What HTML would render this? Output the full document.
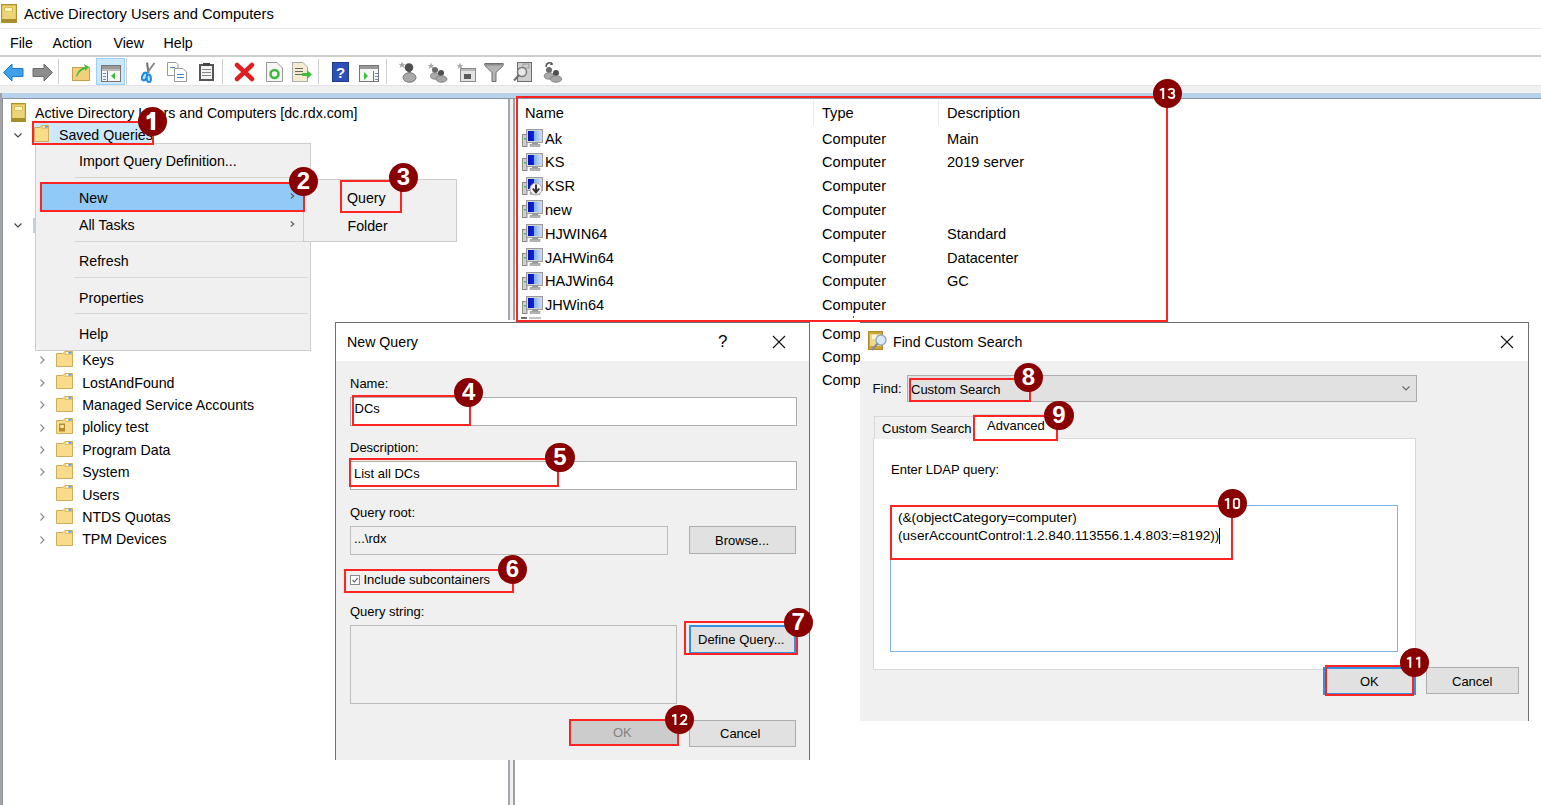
<!DOCTYPE html><html><head><meta charset="utf-8"><style>
html,body{margin:0;padding:0;}
body{width:1541px;height:805px;position:relative;overflow:hidden;background:#fff;font-family:"Liberation Sans",sans-serif;}
.a{position:absolute;}
.t{position:absolute;white-space:pre;}
.badge{background:#880000;border-radius:50%;color:#fff;display:flex;align-items:center;justify-content:center;}
</style></head><body>
<svg class="a" style="left:1px;top:4px" width="16" height="19" viewBox="0 0 16 19"><rect x="0.5" y="0.5" width="15" height="18" fill="#d9bd52" stroke="#b0922e"/><rect x="1.5" y="2" width="13" height="13" fill="#ecd47a"/><rect x="3" y="3" width="9" height="4.5" fill="#d8bc50"/><rect x="4" y="4" width="7" height="3" fill="#fff6c4"/><rect x="1" y="15" width="14" height="3.5" fill="#a88d2a"/></svg>
<div class="t" style="left:24px;top:6.56px;font-size:14.7px;line-height:14.7px;color:#000;">Active Directory Users and Computers</div>
<div class="a" style="left:0px;top:28px;width:1541px;height:1px;background:#e8e8e8;"></div>
<div class="t" style="left:10px;top:35.98px;font-size:14.2px;line-height:14.2px;color:#000;">File</div>
<div class="t" style="left:52.5px;top:35.98px;font-size:14.2px;line-height:14.2px;color:#000;">Action</div>
<div class="t" style="left:113.5px;top:35.98px;font-size:14.2px;line-height:14.2px;color:#000;">View</div>
<div class="t" style="left:163.5px;top:35.98px;font-size:14.2px;line-height:14.2px;color:#000;">Help</div>
<div class="a" style="left:0px;top:55px;width:1541px;height:2px;background:#cdcdcd;"></div>
<div class="a" style="left:96px;top:58px;width:29px;height:27px;background:#cce8ff;border:1px solid #99d1ff;box-sizing:border-box;"></div>
<div class="a" style="left:58px;top:59px;width:1px;height:25px;background:#cfcfcf;"></div>
<div class="a" style="left:126px;top:59px;width:1px;height:25px;background:#cfcfcf;"></div>
<div class="a" style="left:222px;top:59px;width:1px;height:25px;background:#cfcfcf;"></div>
<div class="a" style="left:318px;top:59px;width:1px;height:25px;background:#cfcfcf;"></div>
<div class="a" style="left:386px;top:59px;width:1px;height:25px;background:#cfcfcf;"></div>
<div class="a" style="left:0px;top:85px;width:1541px;height:8px;background:#f0f0f0;"></div>
<div class="a" style="left:0px;top:85px;width:1541px;height:1px;background:#e4e4e4;"></div>
<div class="a" style="left:0px;top:93px;width:1541px;height:5px;background:#b9d1ea;"></div>
<div class="a" style="left:0px;top:98px;width:1541px;height:1px;background:#8a96a3;"></div>
<div class="a" style="left:0px;top:93px;width:2px;height:712px;background:#a3a3a3;"></div>
<div class="a" style="left:2px;top:99px;width:1px;height:706px;background:#8c939c;"></div>
<div class="a" style="left:508px;top:99px;width:2px;height:706px;background:#a3a8ae;"></div>
<div class="a" style="left:510px;top:99px;width:3px;height:706px;background:#f0f0f0;"></div>
<div class="a" style="left:513px;top:99px;width:2px;height:706px;background:#a0a0a0;"></div>
<div class="a" style="left:507px;top:320px;width:9px;height:2px;background:#ffffff;"></div>
<div id="icons">
<svg class="a" style="left:3px;top:63px" width="21" height="19" viewBox="0 0 21 19"><path d="M0.5 9.5 L9 1 V5.5 H20 V13.5 H9 V18 Z" fill="#3da0e8" stroke="#1f78c8"/></svg>
<svg class="a" style="left:32px;top:63px" width="21" height="19" viewBox="0 0 21 19"><path d="M20.5 9.5 L12 1 V5.5 H1 V13.5 H12 V18 Z" fill="#8d8d8d" stroke="#6a6a6a"/></svg>
<svg class="a" style="left:72px;top:62px" width="19" height="20" viewBox="0 0 19 20"><rect x="0.5" y="5.5" width="17" height="13" fill="#f4cf7a" stroke="#c9a04e"/><path d="M4 14 C6 8 9 6 13 5 L12 2 L17 5 L13 9 L13 7 C10 8 7 10 5 15Z" fill="#3cbf3c"/></svg>
<svg class="a" style="left:101px;top:65px" width="21" height="17" viewBox="0 0 21 17"><rect x="0.5" y="0.5" width="19" height="16" fill="#f6f6f6" stroke="#777"/><rect x="1" y="1" width="18" height="3" fill="#999"/><rect x="1" y="4" width="18" height="2" fill="#bbb"/><rect x="6" y="6" width="1" height="10" fill="#777"/><rect x="2" y="8" width="3" height="1" fill="#5a8ad0"/><rect x="2" y="11" width="3" height="1" fill="#5a8ad0"/><rect x="2" y="14" width="3" height="1" fill="#5a8ad0"/><path d="M10 11 L14 7.5 V14.5Z" fill="#3cbf3c"/></svg>
<svg class="a" style="left:141px;top:61px" width="16" height="22" viewBox="0 0 16 22"><path d="M7.5 12 L6 1.5" stroke="#707070" stroke-width="2"/><path d="M6 12 L13.5 2" stroke="#8a8a8a" stroke-width="2"/><ellipse transform="rotate(25 3.6 15.5)" cx="3.6" cy="15.5" rx="2.4" ry="4" fill="#bfe0ff" stroke="#1f8ae8" stroke-width="2"/><ellipse transform="rotate(-5 7.8 17.3)" cx="7.8" cy="17.3" rx="2.1" ry="3.8" fill="#bfe0ff" stroke="#1f8ae8" stroke-width="2"/></svg>
<svg class="a" style="left:167px;top:62px" width="21" height="20" viewBox="0 0 21 20"><path d="M0.5 0.5 H9 L11 2.5 V13.5 H0.5Z" fill="#fff" stroke="#999"/><path d="M7.5 6.5 H16 L19.5 10 V19.5 H7.5Z" fill="#fff" stroke="#999"/><rect x="10" y="12" width="7" height="1" fill="#4a86d0"/><rect x="10" y="15" width="7" height="1" fill="#4a86d0"/><rect x="3" y="5" width="5" height="1" fill="#4a86d0"/></svg>
<svg class="a" style="left:198px;top:62px" width="17" height="20" viewBox="0 0 17 20"><rect x="1" y="2" width="15" height="17" fill="#555" /><rect x="3" y="4" width="11" height="13" fill="#f4f4f4"/><rect x="5" y="1" width="7" height="3" fill="#444"/><rect x="4" y="7" width="9" height="1" fill="#888"/><rect x="4" y="10" width="9" height="1" fill="#888"/><rect x="4" y="13" width="9" height="1" fill="#888"/></svg>
<svg class="a" style="left:234px;top:62px" width="21" height="20" viewBox="0 0 21 20"><path d="M3 3 L18 17 M18 3 L3 17" stroke="#e02020" stroke-width="4.5" stroke-linecap="round"/></svg>
<svg class="a" style="left:266px;top:62px" width="17" height="20" viewBox="0 0 17 20"><path d="M0.5 0.5 H11 L16.5 6 V19.5 H0.5Z" fill="#f6f6f6" stroke="#999"/><circle cx="8.5" cy="12" r="4" fill="none" stroke="#3cb83c" stroke-width="2.5"/></svg>
<svg class="a" style="left:292px;top:62px" width="21" height="20" viewBox="0 0 21 20"><path d="M0.5 0.5 H11 L15.5 5 V19.5 H0.5Z" fill="#f3ecd0" stroke="#aaa"/><rect x="3" y="6" width="8" height="1" fill="#666"/><rect x="3" y="9" width="8" height="1" fill="#666"/><rect x="3" y="12" width="8" height="1" fill="#666"/><path d="M10 11 H15 V8 L20 12.5 L15 17 V14 H10Z" fill="#3cbf3c"/></svg>
<svg class="a" style="left:332px;top:62px" width="17" height="20" viewBox="0 0 17 20"><rect x="0.5" y="0.5" width="16" height="19" fill="#2d4fb8" stroke="#1e3a8a"/><text x="8.5" y="16" font-size="15" font-weight="bold" fill="#fff" text-anchor="middle" font-family="Liberation Sans">?</text></svg>
<svg class="a" style="left:359px;top:65px" width="21" height="17" viewBox="0 0 21 17"><rect x="0.5" y="0.5" width="19" height="16" fill="#f6f6f6" stroke="#777"/><rect x="1" y="1" width="18" height="3" fill="#999"/><rect x="14" y="6" width="1" height="10" fill="#777"/><rect x="16" y="8" width="3" height="1" fill="#5a8ad0"/><rect x="16" y="11" width="3" height="1" fill="#5a8ad0"/><rect x="16" y="14" width="3" height="1" fill="#5a8ad0"/><path d="M5 7 L9 11 L5 15Z" fill="#3cbf3c"/></svg>
<svg class="a" style="left:398px;top:61px" width="20" height="22" viewBox="0 0 20 22"><path d="M4 0.5 L5 3 L7.5 2.8 L5.5 4.6 L6.5 7 L4 5.5 L1.5 7 L2.5 4.6 L0.5 2.8 L3 3Z" fill="#a8a8a8"/><circle cx="11" cy="6.5" r="4.3" fill="#4e4e4e"/><path d="M9 10 L13 10 L12 13 Z" fill="#555"/><ellipse cx="11.5" cy="16.5" rx="6.5" ry="4.8" fill="#a9a9a9" stroke="#7a7a7a"/></svg>
<svg class="a" style="left:427px;top:62px" width="21" height="21" viewBox="0 0 21 21"><path d="M4 0.5 L5 3 L7.5 2.8 L5.5 4.6 L6.5 7 L4 5.5 L1.5 7 L2.5 4.6 L0.5 2.8 L3 3Z" fill="#a8a8a8"/><circle cx="8" cy="8" r="3" fill="#6a6a6a"/><ellipse cx="8" cy="14" rx="4.5" ry="3.2" fill="#aaa" stroke="#808080" stroke-width="0.8"/><circle cx="14" cy="11" r="3" fill="#4e4e4e"/><ellipse cx="14.5" cy="17" rx="5.5" ry="3.3" fill="#a5a5a5" stroke="#7a7a7a" stroke-width="0.8"/></svg>
<svg class="a" style="left:456px;top:62px" width="21" height="21" viewBox="0 0 21 21"><path d="M4 0.5 L5 3 L7.5 2.8 L5.5 4.6 L6.5 7 L4 5.5 L1.5 7 L2.5 4.6 L0.5 2.8 L3 3Z" fill="#a8a8a8"/><rect x="4.5" y="6.5" width="15" height="13" fill="#e2e2e2" stroke="#8a8a8a"/><rect x="5" y="7" width="14" height="2" fill="#b8b8b8"/><rect x="8" y="12" width="7" height="5" fill="#5a5a5a"/></svg>
<svg class="a" style="left:484px;top:62px" width="20" height="21" viewBox="0 0 20 21"><path d="M0.8 1.5 H19.2 V3.5 L12 10.5 V19.5 H8 V10.5 L0.8 3.5Z" fill="#b4b4b4" stroke="#6e6e6e"/><rect x="1.5" y="2" width="17" height="1.5" fill="#8a8a8a"/></svg>
<svg class="a" style="left:512px;top:62px" width="21" height="21" viewBox="0 0 21 21"><rect x="5.5" y="0.5" width="14" height="19" fill="#cfcfcf" stroke="#6e6e6e"/><rect x="11" y="2" width="6" height="4" fill="none" stroke="#999"/><circle cx="10" cy="10" r="4.5" fill="#e8e8e8" stroke="#7a7a7a" stroke-width="1.5"/><path d="M7 13 L2 18.5" stroke="#6e6e6e" stroke-width="2"/></svg>
<svg class="a" style="left:541px;top:61px" width="22" height="22" viewBox="0 0 22 22"><path d="M5 6 C5 2 9 0.5 11.5 3" stroke="#555" fill="none" stroke-width="1.5"/><path d="M10.5 1 L12 4 L9 4Z" fill="#555"/><circle cx="8" cy="9" r="3" fill="#6a6a6a"/><ellipse cx="8" cy="15" rx="4.8" ry="3.2" fill="#aaa" stroke="#808080" stroke-width="0.8"/><circle cx="15" cy="12" r="3" fill="#4e4e4e"/><ellipse cx="15" cy="18" rx="5.8" ry="3.3" fill="#a5a5a5" stroke="#7a7a7a" stroke-width="0.8"/></svg>
</div>
<svg class="a" style="left:11px;top:103px" width="15" height="19" viewBox="0 0 15 19"><rect x="0.5" y="0.5" width="14" height="18" fill="#d9bd52" stroke="#b0922e"/><rect x="1.5" y="2" width="12" height="13" fill="#ecd47a"/><rect x="3" y="3" width="9" height="4.5" fill="#d8bc50"/><rect x="4" y="4" width="7" height="3" fill="#fff6c4"/><rect x="1" y="15" width="13" height="3.5" fill="#a88d2a"/></svg>
<div class="t" style="left:35px;top:105.98px;font-size:14.2px;line-height:14.2px;color:#000;">Active Directory Users and Computers [dc.rdx.com]</div>
<div class="a" style="left:33px;top:122px;width:119px;height:22px;background:#cce8ff;"></div>
<svg class="a" style="left:34px;top:125px" width="15" height="17" viewBox="0 0 15 17"><path d="M0.5 2.5 H6.3 L7.8 0.5 H14.5 V16.5 H0.5 Z" fill="#f3d27c" stroke="#cfae5a"/><rect x="1" y="3" width="13" height="13" fill="#f8dc8c"/><path d="M7.5 3.5 H14" stroke="#e2c26c"/><rect x="10.8" y="1" width="3.0" height="1.6" fill="#5a9ee6"/><rect x="9.3" y="1" width="1.5" height="1.6" fill="#ffffff"/></svg>
<div class="t" style="left:59px;top:127.98px;font-size:14.2px;line-height:14.2px;color:#000;">Saved Queries</div>
<svg class="a" style="left:14px;top:133px" width="8" height="5" viewBox="0 0 8 5"><path d="M0.5 0.5 L4 4 L7.5 0.5" fill="none" stroke="#444" stroke-width="1.2"/></svg>
<svg class="a" style="left:14px;top:223px" width="8" height="5" viewBox="0 0 8 5"><path d="M0.5 0.5 L4 4 L7.5 0.5" fill="none" stroke="#444" stroke-width="1.2"/></svg>
<div class="a" style="left:33px;top:218px;width:2px;height:15px;background:#c8d0dc;"></div>
<svg class="a" style="left:40px;top:356.3px" width="5" height="8" viewBox="0 0 5 8"><path d="M0.5 0.5 L4 4 L0.5 7.5" fill="none" stroke="#888" stroke-width="1.1"/></svg>
<svg class="a" style="left:56px;top:351.0px" width="17" height="16" viewBox="0 0 17 16"><path d="M0.5 2.5 H7.1 L8.8 0.5 H16.5 V15.5 H0.5 Z" fill="#f3d27c" stroke="#cfae5a"/><rect x="1" y="3" width="15" height="12" fill="#f8dc8c"/><path d="M8.5 3.5 H16" stroke="#e2c26c"/><rect x="12.2" y="1" width="3.4" height="1.6" fill="#5a9ee6"/><rect x="10.5" y="1" width="1.7" height="1.6" fill="#ffffff"/></svg>
<div class="t" style="left:82.2px;top:353.28px;font-size:14.2px;line-height:14.2px;color:#000;">Keys</div>
<svg class="a" style="left:40px;top:378.7px" width="5" height="8" viewBox="0 0 5 8"><path d="M0.5 0.5 L4 4 L0.5 7.5" fill="none" stroke="#888" stroke-width="1.1"/></svg>
<svg class="a" style="left:56px;top:373.4px" width="17" height="16" viewBox="0 0 17 16"><path d="M0.5 2.5 H7.1 L8.8 0.5 H16.5 V15.5 H0.5 Z" fill="#f3d27c" stroke="#cfae5a"/><rect x="1" y="3" width="15" height="12" fill="#f8dc8c"/><path d="M8.5 3.5 H16" stroke="#e2c26c"/><rect x="12.2" y="1" width="3.4" height="1.6" fill="#5a9ee6"/><rect x="10.5" y="1" width="1.7" height="1.6" fill="#ffffff"/></svg>
<div class="t" style="left:82.2px;top:375.68px;font-size:14.2px;line-height:14.2px;color:#000;">LostAndFound</div>
<svg class="a" style="left:40px;top:401.1px" width="5" height="8" viewBox="0 0 5 8"><path d="M0.5 0.5 L4 4 L0.5 7.5" fill="none" stroke="#888" stroke-width="1.1"/></svg>
<svg class="a" style="left:56px;top:395.8px" width="17" height="16" viewBox="0 0 17 16"><path d="M0.5 2.5 H7.1 L8.8 0.5 H16.5 V15.5 H0.5 Z" fill="#f3d27c" stroke="#cfae5a"/><rect x="1" y="3" width="15" height="12" fill="#f8dc8c"/><path d="M8.5 3.5 H16" stroke="#e2c26c"/><rect x="12.2" y="1" width="3.4" height="1.6" fill="#5a9ee6"/><rect x="10.5" y="1" width="1.7" height="1.6" fill="#ffffff"/></svg>
<div class="t" style="left:82.2px;top:398.08px;font-size:14.2px;line-height:14.2px;color:#000;">Managed Service Accounts</div>
<svg class="a" style="left:40px;top:423.5px" width="5" height="8" viewBox="0 0 5 8"><path d="M0.5 0.5 L4 4 L0.5 7.5" fill="none" stroke="#888" stroke-width="1.1"/></svg>
<svg class="a" style="left:56px;top:418.2px" width="17" height="16" viewBox="0 0 17 16"><path d="M0.5 2.5 H7.1 L8.8 0.5 H16.5 V15.5 H0.5 Z" fill="#f3d27c" stroke="#cfae5a"/><rect x="1" y="3" width="15" height="12" fill="#f8dc8c"/><path d="M8.5 3.5 H16" stroke="#e2c26c"/><rect x="12.2" y="1" width="3.4" height="1.6" fill="#5a9ee6"/><rect x="10.5" y="1" width="1.7" height="1.6" fill="#ffffff"/><rect x="3" y="5.5" width="6" height="8" fill="#b08a2c"/><rect x="4.2" y="7" width="3.6" height="3" fill="#f5e7a8"/></svg>
<div class="t" style="left:82.2px;top:420.48px;font-size:14.2px;line-height:14.2px;color:#000;">plolicy test</div>
<svg class="a" style="left:40px;top:445.9px" width="5" height="8" viewBox="0 0 5 8"><path d="M0.5 0.5 L4 4 L0.5 7.5" fill="none" stroke="#888" stroke-width="1.1"/></svg>
<svg class="a" style="left:56px;top:440.59999999999997px" width="17" height="16" viewBox="0 0 17 16"><path d="M0.5 2.5 H7.1 L8.8 0.5 H16.5 V15.5 H0.5 Z" fill="#f3d27c" stroke="#cfae5a"/><rect x="1" y="3" width="15" height="12" fill="#f8dc8c"/><path d="M8.5 3.5 H16" stroke="#e2c26c"/><rect x="12.2" y="1" width="3.4" height="1.6" fill="#5a9ee6"/><rect x="10.5" y="1" width="1.7" height="1.6" fill="#ffffff"/></svg>
<div class="t" style="left:82.2px;top:442.88px;font-size:14.2px;line-height:14.2px;color:#000;">Program Data</div>
<svg class="a" style="left:40px;top:468.3px" width="5" height="8" viewBox="0 0 5 8"><path d="M0.5 0.5 L4 4 L0.5 7.5" fill="none" stroke="#888" stroke-width="1.1"/></svg>
<svg class="a" style="left:56px;top:463.0px" width="17" height="16" viewBox="0 0 17 16"><path d="M0.5 2.5 H7.1 L8.8 0.5 H16.5 V15.5 H0.5 Z" fill="#f3d27c" stroke="#cfae5a"/><rect x="1" y="3" width="15" height="12" fill="#f8dc8c"/><path d="M8.5 3.5 H16" stroke="#e2c26c"/><rect x="12.2" y="1" width="3.4" height="1.6" fill="#5a9ee6"/><rect x="10.5" y="1" width="1.7" height="1.6" fill="#ffffff"/></svg>
<div class="t" style="left:82.2px;top:465.28px;font-size:14.2px;line-height:14.2px;color:#000;">System</div>
<svg class="a" style="left:56px;top:485.4px" width="17" height="16" viewBox="0 0 17 16"><path d="M0.5 2.5 H7.1 L8.8 0.5 H16.5 V15.5 H0.5 Z" fill="#f3d27c" stroke="#cfae5a"/><rect x="1" y="3" width="15" height="12" fill="#f8dc8c"/><path d="M8.5 3.5 H16" stroke="#e2c26c"/><rect x="12.2" y="1" width="3.4" height="1.6" fill="#5a9ee6"/><rect x="10.5" y="1" width="1.7" height="1.6" fill="#ffffff"/></svg>
<div class="t" style="left:82.2px;top:487.68px;font-size:14.2px;line-height:14.2px;color:#000;">Users</div>
<svg class="a" style="left:40px;top:513.1px" width="5" height="8" viewBox="0 0 5 8"><path d="M0.5 0.5 L4 4 L0.5 7.5" fill="none" stroke="#888" stroke-width="1.1"/></svg>
<svg class="a" style="left:56px;top:507.8px" width="17" height="16" viewBox="0 0 17 16"><path d="M0.5 2.5 H7.1 L8.8 0.5 H16.5 V15.5 H0.5 Z" fill="#f3d27c" stroke="#cfae5a"/><rect x="1" y="3" width="15" height="12" fill="#f8dc8c"/><path d="M8.5 3.5 H16" stroke="#e2c26c"/><rect x="12.2" y="1" width="3.4" height="1.6" fill="#5a9ee6"/><rect x="10.5" y="1" width="1.7" height="1.6" fill="#ffffff"/></svg>
<div class="t" style="left:82.2px;top:510.08px;font-size:14.2px;line-height:14.2px;color:#000;">NTDS Quotas</div>
<svg class="a" style="left:40px;top:535.5px" width="5" height="8" viewBox="0 0 5 8"><path d="M0.5 0.5 L4 4 L0.5 7.5" fill="none" stroke="#888" stroke-width="1.1"/></svg>
<svg class="a" style="left:56px;top:530.2px" width="17" height="16" viewBox="0 0 17 16"><path d="M0.5 2.5 H7.1 L8.8 0.5 H16.5 V15.5 H0.5 Z" fill="#f3d27c" stroke="#cfae5a"/><rect x="1" y="3" width="15" height="12" fill="#f8dc8c"/><path d="M8.5 3.5 H16" stroke="#e2c26c"/><rect x="12.2" y="1" width="3.4" height="1.6" fill="#5a9ee6"/><rect x="10.5" y="1" width="1.7" height="1.6" fill="#ffffff"/></svg>
<div class="t" style="left:82.2px;top:532.48px;font-size:14.2px;line-height:14.2px;color:#000;">TPM Devices</div>
<div class="a" style="left:813px;top:100px;width:1px;height:26px;background:#ececec;"></div>
<div class="a" style="left:938px;top:100px;width:1px;height:26px;background:#ececec;"></div>
<div class="t" style="left:525px;top:105.64px;font-size:14.6px;line-height:14.6px;color:#000;">Name</div>
<div class="t" style="left:822px;top:105.64px;font-size:14.6px;line-height:14.6px;color:#000;">Type</div>
<div class="t" style="left:947px;top:105.64px;font-size:14.6px;line-height:14.6px;color:#000;">Description</div>
<svg class="a" style="left:521.5px;top:129.0px" width="21" height="19" viewBox="0 0 21 19"><defs><linearGradient id="scr" x1="0" y1="0" x2="1" y2="0"><stop offset="0" stop-color="#0612b8"/><stop offset="0.45" stop-color="#0a2ad8"/><stop offset="0.5" stop-color="#88b0ee"/><stop offset="1" stop-color="#c8dcf6"/></linearGradient></defs><rect x="0.5" y="5.5" width="4.5" height="12" fill="#cfcfcf" stroke="#8a8a8a"/><rect x="2" y="9" width="2" height="1.5" fill="#33cc33"/><rect x="4.5" y="0.5" width="16" height="13" fill="#d6d6d6" stroke="#9a9a9a"/><rect x="6" y="2" width="13" height="10" fill="url(#scr)"/><rect x="10" y="13.5" width="6" height="2" fill="#9a9a9a"/><rect x="8" y="15.5" width="10" height="2" fill="#b4b4b4" stroke="#888" stroke-width="0.5"/></svg>
<div class="t" style="left:545px;top:131.54px;font-size:14.6px;line-height:14.6px;color:#000;">Ak</div>
<div class="t" style="left:822px;top:131.54px;font-size:14.6px;line-height:14.6px;color:#000;">Computer</div>
<div class="t" style="left:947px;top:131.54px;font-size:14.6px;line-height:14.6px;color:#000;">Main</div>
<svg class="a" style="left:521.5px;top:152.8px" width="21" height="19" viewBox="0 0 21 19"><defs><linearGradient id="scr" x1="0" y1="0" x2="1" y2="0"><stop offset="0" stop-color="#0612b8"/><stop offset="0.45" stop-color="#0a2ad8"/><stop offset="0.5" stop-color="#88b0ee"/><stop offset="1" stop-color="#c8dcf6"/></linearGradient></defs><rect x="0.5" y="5.5" width="4.5" height="12" fill="#cfcfcf" stroke="#8a8a8a"/><rect x="2" y="9" width="2" height="1.5" fill="#33cc33"/><rect x="4.5" y="0.5" width="16" height="13" fill="#d6d6d6" stroke="#9a9a9a"/><rect x="6" y="2" width="13" height="10" fill="url(#scr)"/><rect x="10" y="13.5" width="6" height="2" fill="#9a9a9a"/><rect x="8" y="15.5" width="10" height="2" fill="#b4b4b4" stroke="#888" stroke-width="0.5"/></svg>
<div class="t" style="left:545px;top:155.34px;font-size:14.6px;line-height:14.6px;color:#000;">KS</div>
<div class="t" style="left:822px;top:155.34px;font-size:14.6px;line-height:14.6px;color:#000;">Computer</div>
<div class="t" style="left:947px;top:155.34px;font-size:14.6px;line-height:14.6px;color:#000;">2019 server</div>
<svg class="a" style="left:521.5px;top:176.6px" width="21" height="19" viewBox="0 0 21 19"><defs><linearGradient id="scr" x1="0" y1="0" x2="1" y2="0"><stop offset="0" stop-color="#0612b8"/><stop offset="0.45" stop-color="#0a2ad8"/><stop offset="0.5" stop-color="#88b0ee"/><stop offset="1" stop-color="#c8dcf6"/></linearGradient></defs><rect x="0.5" y="5.5" width="4.5" height="12" fill="#cfcfcf" stroke="#8a8a8a"/><rect x="2" y="9" width="2" height="1.5" fill="#33cc33"/><rect x="4.5" y="0.5" width="16" height="13" fill="#d6d6d6" stroke="#9a9a9a"/><rect x="6" y="2" width="13" height="10" fill="url(#scr)"/><rect x="10" y="13.5" width="6" height="2" fill="#9a9a9a"/><rect x="8" y="15.5" width="10" height="2" fill="#b4b4b4" stroke="#888" stroke-width="0.5"/><circle cx="14" cy="12" r="6" fill="#f4f4f4" stroke="#aaa"/><path d="M14 7.5 V14 M10.8 11.5 L14 15.5 L17.2 11.5" fill="none" stroke="#333" stroke-width="2"/></svg>
<div class="t" style="left:545px;top:179.14px;font-size:14.6px;line-height:14.6px;color:#000;">KSR</div>
<div class="t" style="left:822px;top:179.14px;font-size:14.6px;line-height:14.6px;color:#000;">Computer</div>
<svg class="a" style="left:521.5px;top:200.4px" width="21" height="19" viewBox="0 0 21 19"><defs><linearGradient id="scr" x1="0" y1="0" x2="1" y2="0"><stop offset="0" stop-color="#0612b8"/><stop offset="0.45" stop-color="#0a2ad8"/><stop offset="0.5" stop-color="#88b0ee"/><stop offset="1" stop-color="#c8dcf6"/></linearGradient></defs><rect x="0.5" y="5.5" width="4.5" height="12" fill="#cfcfcf" stroke="#8a8a8a"/><rect x="2" y="9" width="2" height="1.5" fill="#33cc33"/><rect x="4.5" y="0.5" width="16" height="13" fill="#d6d6d6" stroke="#9a9a9a"/><rect x="6" y="2" width="13" height="10" fill="url(#scr)"/><rect x="10" y="13.5" width="6" height="2" fill="#9a9a9a"/><rect x="8" y="15.5" width="10" height="2" fill="#b4b4b4" stroke="#888" stroke-width="0.5"/></svg>
<div class="t" style="left:545px;top:202.94px;font-size:14.6px;line-height:14.6px;color:#000;">new</div>
<div class="t" style="left:822px;top:202.94px;font-size:14.6px;line-height:14.6px;color:#000;">Computer</div>
<svg class="a" style="left:521.5px;top:224.20000000000002px" width="21" height="19" viewBox="0 0 21 19"><defs><linearGradient id="scr" x1="0" y1="0" x2="1" y2="0"><stop offset="0" stop-color="#0612b8"/><stop offset="0.45" stop-color="#0a2ad8"/><stop offset="0.5" stop-color="#88b0ee"/><stop offset="1" stop-color="#c8dcf6"/></linearGradient></defs><rect x="0.5" y="5.5" width="4.5" height="12" fill="#cfcfcf" stroke="#8a8a8a"/><rect x="2" y="9" width="2" height="1.5" fill="#33cc33"/><rect x="4.5" y="0.5" width="16" height="13" fill="#d6d6d6" stroke="#9a9a9a"/><rect x="6" y="2" width="13" height="10" fill="url(#scr)"/><rect x="10" y="13.5" width="6" height="2" fill="#9a9a9a"/><rect x="8" y="15.5" width="10" height="2" fill="#b4b4b4" stroke="#888" stroke-width="0.5"/></svg>
<div class="t" style="left:545px;top:226.74px;font-size:14.6px;line-height:14.6px;color:#000;">HJWIN64</div>
<div class="t" style="left:822px;top:226.74px;font-size:14.6px;line-height:14.6px;color:#000;">Computer</div>
<div class="t" style="left:947px;top:226.74px;font-size:14.6px;line-height:14.6px;color:#000;">Standard</div>
<svg class="a" style="left:521.5px;top:247.99999999999997px" width="21" height="19" viewBox="0 0 21 19"><defs><linearGradient id="scr" x1="0" y1="0" x2="1" y2="0"><stop offset="0" stop-color="#0612b8"/><stop offset="0.45" stop-color="#0a2ad8"/><stop offset="0.5" stop-color="#88b0ee"/><stop offset="1" stop-color="#c8dcf6"/></linearGradient></defs><rect x="0.5" y="5.5" width="4.5" height="12" fill="#cfcfcf" stroke="#8a8a8a"/><rect x="2" y="9" width="2" height="1.5" fill="#33cc33"/><rect x="4.5" y="0.5" width="16" height="13" fill="#d6d6d6" stroke="#9a9a9a"/><rect x="6" y="2" width="13" height="10" fill="url(#scr)"/><rect x="10" y="13.5" width="6" height="2" fill="#9a9a9a"/><rect x="8" y="15.5" width="10" height="2" fill="#b4b4b4" stroke="#888" stroke-width="0.5"/></svg>
<div class="t" style="left:545px;top:250.54px;font-size:14.6px;line-height:14.6px;color:#000;">JAHWin64</div>
<div class="t" style="left:822px;top:250.54px;font-size:14.6px;line-height:14.6px;color:#000;">Computer</div>
<div class="t" style="left:947px;top:250.54px;font-size:14.6px;line-height:14.6px;color:#000;">Datacenter</div>
<svg class="a" style="left:521.5px;top:271.80000000000007px" width="21" height="19" viewBox="0 0 21 19"><defs><linearGradient id="scr" x1="0" y1="0" x2="1" y2="0"><stop offset="0" stop-color="#0612b8"/><stop offset="0.45" stop-color="#0a2ad8"/><stop offset="0.5" stop-color="#88b0ee"/><stop offset="1" stop-color="#c8dcf6"/></linearGradient></defs><rect x="0.5" y="5.5" width="4.5" height="12" fill="#cfcfcf" stroke="#8a8a8a"/><rect x="2" y="9" width="2" height="1.5" fill="#33cc33"/><rect x="4.5" y="0.5" width="16" height="13" fill="#d6d6d6" stroke="#9a9a9a"/><rect x="6" y="2" width="13" height="10" fill="url(#scr)"/><rect x="10" y="13.5" width="6" height="2" fill="#9a9a9a"/><rect x="8" y="15.5" width="10" height="2" fill="#b4b4b4" stroke="#888" stroke-width="0.5"/></svg>
<div class="t" style="left:545px;top:274.34px;font-size:14.6px;line-height:14.6px;color:#000;">HAJWin64</div>
<div class="t" style="left:822px;top:274.34px;font-size:14.6px;line-height:14.6px;color:#000;">Computer</div>
<div class="t" style="left:947px;top:274.34px;font-size:14.6px;line-height:14.6px;color:#000;">GC</div>
<svg class="a" style="left:521.5px;top:295.6px" width="21" height="19" viewBox="0 0 21 19"><defs><linearGradient id="scr" x1="0" y1="0" x2="1" y2="0"><stop offset="0" stop-color="#0612b8"/><stop offset="0.45" stop-color="#0a2ad8"/><stop offset="0.5" stop-color="#88b0ee"/><stop offset="1" stop-color="#c8dcf6"/></linearGradient></defs><rect x="0.5" y="5.5" width="4.5" height="12" fill="#cfcfcf" stroke="#8a8a8a"/><rect x="2" y="9" width="2" height="1.5" fill="#33cc33"/><rect x="4.5" y="0.5" width="16" height="13" fill="#d6d6d6" stroke="#9a9a9a"/><rect x="6" y="2" width="13" height="10" fill="url(#scr)"/><rect x="10" y="13.5" width="6" height="2" fill="#9a9a9a"/><rect x="8" y="15.5" width="10" height="2" fill="#b4b4b4" stroke="#888" stroke-width="0.5"/></svg>
<div class="t" style="left:545px;top:298.14px;font-size:14.6px;line-height:14.6px;color:#000;">JHWin64</div>
<div class="t" style="left:822px;top:298.14px;font-size:14.6px;line-height:14.6px;color:#000;">Computer</div>
<div class="a" style="left:853px;top:311px;width:1px;height:2px;background:#555;"></div>
<div class="a" style="left:853px;top:316px;width:1px;height:2px;background:#555;"></div>
<div class="a" style="left:521px;top:317px;width:6px;height:1.5px;background:#6a6a6a;"></div>
<div class="a" style="left:529px;top:317px;width:12px;height:1.5px;background:#c4c4c4;"></div>
<div class="t" style="left:822px;top:326.64px;font-size:14.6px;line-height:14.6px;color:#000;">Computer</div>
<div class="t" style="left:822px;top:349.94px;font-size:14.6px;line-height:14.6px;color:#000;">Computer</div>
<div class="t" style="left:822px;top:373.44px;font-size:14.6px;line-height:14.6px;color:#000;">Computer</div>
<div class="a" style="left:35px;top:143px;width:276px;height:208px;background:#f0f0f0;border:1px solid #cccccc;box-sizing:border-box;"></div>
<div class="a" style="left:41px;top:183px;width:262px;height:28px;background:#91c9f7;"></div>
<div class="a" style="left:74px;top:177px;width:234px;height:1px;background:#d7d7d7;"></div>
<div class="a" style="left:74px;top:241px;width:234px;height:1px;background:#d7d7d7;"></div>
<div class="a" style="left:74px;top:277px;width:234px;height:1px;background:#d7d7d7;"></div>
<div class="a" style="left:74px;top:313px;width:234px;height:1px;background:#d7d7d7;"></div>
<div class="t" style="left:79px;top:154.28px;font-size:14.2px;line-height:14.2px;color:#000;">Import Query Definition...</div>
<div class="t" style="left:79px;top:190.68px;font-size:14.2px;line-height:14.2px;color:#000;">New</div>
<div class="t" style="left:79px;top:218.48px;font-size:14.2px;line-height:14.2px;color:#000;">All Tasks</div>
<div class="t" style="left:79px;top:254.48px;font-size:14.2px;line-height:14.2px;color:#000;">Refresh</div>
<div class="t" style="left:79px;top:290.98px;font-size:14.2px;line-height:14.2px;color:#000;">Properties</div>
<div class="t" style="left:79px;top:327.08px;font-size:14.2px;line-height:14.2px;color:#000;">Help</div>
<svg class="a" style="left:289.5px;top:192.5px" width="5" height="6" viewBox="0 0 5 6"><path d="M0.8 0.5 L3.8 3 L0.8 5.5" fill="none" stroke="#5a5a5a" stroke-width="1.1"/></svg>
<svg class="a" style="left:289.5px;top:220.5px" width="5" height="6" viewBox="0 0 5 6"><path d="M0.8 0.5 L3.8 3 L0.8 5.5" fill="none" stroke="#5a5a5a" stroke-width="1.1"/></svg>
<div class="a" style="left:303px;top:179px;width:154px;height:63px;background:#f0f0f0;border:1px solid #cccccc;box-sizing:border-box;"></div>
<div class="t" style="left:347px;top:191.18px;font-size:14.2px;line-height:14.2px;color:#000;">Query</div>
<div class="t" style="left:347.5px;top:218.68px;font-size:14.2px;line-height:14.2px;color:#000;">Folder</div>
<div class="a" style="left:335px;top:322px;width:475px;height:438px;background:#f0f0f0;border:1px solid #6f6f6f;border-bottom:none;box-sizing:border-box;"></div>
<div class="a" style="left:336px;top:323px;width:473px;height:38px;background:#ffffff;"></div>
<div class="t" style="left:347px;top:334.78px;font-size:14.2px;line-height:14.2px;color:#000;">New Query</div>
<div class="t" style="left:718px;top:333.11px;font-size:17px;line-height:17px;color:#000;">?</div>
<svg class="a" style="left:772px;top:335px" width="14" height="14" viewBox="0 0 14 14"><path d="M1 1 L13 13 M13 1 L1 13" stroke="#111" stroke-width="1.1"/></svg>
<div class="t" style="left:350px;top:376.50px;font-size:13px;line-height:13px;color:#000;">Name:</div>
<div class="a" style="left:350px;top:397px;width:447px;height:29px;background:#fff;border:1px solid #adadad;box-sizing:border-box;"></div>
<div class="t" style="left:354.5px;top:402.00px;font-size:13px;line-height:13px;color:#000;">DCs</div>
<div class="t" style="left:350px;top:440.80px;font-size:13px;line-height:13px;color:#000;">Description:</div>
<div class="a" style="left:350px;top:461px;width:447px;height:29px;background:#fff;border:1px solid #adadad;box-sizing:border-box;"></div>
<div class="t" style="left:354px;top:466.50px;font-size:13px;line-height:13px;color:#000;">List all DCs</div>
<div class="t" style="left:350px;top:505.60px;font-size:13px;line-height:13px;color:#000;">Query root:</div>
<div class="a" style="left:350px;top:526px;width:318px;height:29px;background:#f0f0f0;border:1px solid #bcbcbc;box-sizing:border-box;"></div>
<div class="t" style="left:354px;top:532.00px;font-size:13px;line-height:13px;color:#000;">...\rdx</div>
<div class="a" style="left:689px;top:526px;width:107px;height:28px;background:#e1e1e1;border:1px solid #adadad;box-sizing:border-box;"></div>
<div class="t" style="left:715px;top:534.00px;font-size:13px;line-height:13px;color:#000;">Browse...</div>
<div class="a" style="left:350px;top:575px;width:10px;height:10px;background:#fff;border:1px solid #8a8a8a;box-sizing:border-box;"></div>
<svg class="a" style="left:351px;top:576px" width="8" height="8" viewBox="0 0 8 8"><path d="M1.5 4.2 L3.3 6 L6.6 2.2" fill="none" stroke="#555" stroke-width="1.1"/></svg>
<div class="t" style="left:363.5px;top:573.20px;font-size:13px;line-height:13px;color:#000;">Include subcontainers</div>
<div class="t" style="left:350px;top:604.70px;font-size:13px;line-height:13px;color:#000;">Query string:</div>
<div class="a" style="left:350px;top:625px;width:327px;height:79px;background:#f0f0f0;border:1px solid #bcbcbc;box-sizing:border-box;"></div>
<div class="a" style="left:689px;top:625px;width:107px;height:29px;background:#e1e1e1;border:2px solid #3590e0;box-sizing:border-box;"></div>
<div class="t" style="left:698px;top:632.70px;font-size:13px;line-height:13px;color:#000;">Define Query...</div>
<div class="a" style="left:569px;top:720px;width:109px;height:25px;background:#cccccc;border:1px solid #bfbfbf;box-sizing:border-box;"></div>
<div class="t" style="left:613px;top:726.00px;font-size:13px;line-height:13px;color:#838383;">OK</div>
<div class="a" style="left:689px;top:720px;width:107px;height:27px;background:#e1e1e1;border:1px solid #adadad;box-sizing:border-box;"></div>
<div class="t" style="left:720px;top:727.00px;font-size:13px;line-height:13px;color:#000;">Cancel</div>
<div class="a" style="left:860px;top:322px;width:669px;height:399px;background:#f0f0f0;border-top:1px solid #6f6f6f;border-right:1px solid #6f6f6f;box-sizing:border-box;"></div>
<div class="a" style="left:860px;top:323px;width:668px;height:38px;background:#ffffff;"></div>
<svg class="a" style="left:868px;top:331px" width="21" height="20" viewBox="0 0 21 20"><rect x="0.5" y="0.5" width="14" height="18" fill="#c9a53e" stroke="#b08a2c"/><rect x="2" y="3" width="11" height="12" fill="#ecd98e"/><rect x="4" y="4" width="5" height="4" fill="#fff8d8"/><circle cx="13" cy="9" r="5" fill="#dbe8f5" stroke="#9ab" stroke-width="1.5"/><path d="M9.5 12.5 L4 19" stroke="#889" stroke-width="2"/></svg>
<div class="t" style="left:893px;top:334.98px;font-size:14.2px;line-height:14.2px;color:#000;">Find Custom Search</div>
<svg class="a" style="left:1500px;top:335px" width="14" height="14" viewBox="0 0 14 14"><path d="M1 1 L13 13 M13 1 L1 13" stroke="#111" stroke-width="1.1"/></svg>
<div class="t" style="left:872.6px;top:382.00px;font-size:13px;line-height:13px;color:#000;">Find:</div>
<div class="a" style="left:907px;top:375px;width:510px;height:27px;background:#e1e1e1;border:1px solid #adadad;box-sizing:border-box;"></div>
<div class="t" style="left:911px;top:383.00px;font-size:13px;line-height:13px;color:#000;">Custom Search</div>
<svg class="a" style="left:1402px;top:386px" width="8" height="5" viewBox="0 0 8 5"><path d="M0.5 0.5 L4 4 L7.5 0.5" fill="none" stroke="#666" stroke-width="1.1"/></svg>
<div class="a" style="left:872.5px;top:438px;width:543.5px;height:232px;background:#fff;border:1px solid #d9d9d9;box-sizing:border-box;"></div>
<div class="a" style="left:874px;top:416px;width:100px;height:23px;background:#f0f0f0;border:1px solid #d9d9d9;box-sizing:border-box;border-bottom:none;"></div>
<div class="t" style="left:882px;top:421.80px;font-size:13px;line-height:13px;color:#000;">Custom Search</div>
<div class="a" style="left:973px;top:414px;width:85px;height:25px;background:#fff;border:1px solid #d9d9d9;box-sizing:border-box;border-bottom:none;"></div>
<div class="t" style="left:987px;top:419.00px;font-size:13px;line-height:13px;color:#000;">Advanced</div>
<div class="t" style="left:891px;top:463.00px;font-size:13px;line-height:13px;color:#000;">Enter LDAP query:</div>
<div class="a" style="left:890px;top:505px;width:508px;height:147px;background:#fff;border:1px solid #7eb4ea;box-sizing:border-box;"></div>
<div class="t" style="left:898px;top:511.49px;font-size:13.6px;line-height:13.6px;color:#000;">(&amp;(objectCategory=computer)</div>
<div class="t" style="left:898px;top:529.09px;font-size:13.6px;line-height:13.6px;color:#000;">(userAccountControl:1.2.840.113556.1.4.803:=8192))</div>
<div class="a" style="left:1219px;top:528px;width:1px;height:16px;background:#000;"></div>
<div class="a" style="left:1323px;top:667px;width:93px;height:28px;background:#e1e1e1;border:2px solid #3590e0;box-sizing:border-box;"></div>
<div class="t" style="left:1360px;top:675.00px;font-size:13px;line-height:13px;color:#000;">OK</div>
<div class="a" style="left:1426px;top:667px;width:93px;height:27px;background:#e1e1e1;border:1px solid #adadad;box-sizing:border-box;"></div>
<div class="t" style="left:1452px;top:675.00px;font-size:13px;line-height:13px;color:#000;">Cancel</div>
<div class="a" style="left:516px;top:96px;width:652px;height:226px;border:2px solid #fd2424;box-sizing:border-box;"></div>
<div class="a" style="left:32px;top:121px;width:122px;height:24px;border:2px solid #fd2424;box-sizing:border-box;"></div>
<div class="a" style="left:40px;top:182px;width:265px;height:30px;border:2px solid #fd2424;box-sizing:border-box;"></div>
<div class="a" style="left:340px;top:180px;width:62px;height:33px;border:2px solid #fd2424;box-sizing:border-box;"></div>
<div class="a" style="left:352px;top:395px;width:119px;height:31px;border:2px solid #fd2424;box-sizing:border-box;"></div>
<div class="a" style="left:349px;top:458px;width:210px;height:29px;border:2px solid #fd2424;box-sizing:border-box;"></div>
<div class="a" style="left:344px;top:569px;width:170px;height:24px;border:2px solid #fd2424;box-sizing:border-box;"></div>
<div class="a" style="left:684px;top:621px;width:114px;height:34px;border:2px solid #fd2424;box-sizing:border-box;"></div>
<div class="a" style="left:569px;top:719px;width:110px;height:27px;border:2px solid #fd2424;box-sizing:border-box;"></div>
<div class="a" style="left:909px;top:378px;width:122px;height:23.5px;border:2px solid #fd2424;box-sizing:border-box;"></div>
<div class="a" style="left:973px;top:414.5px;width:85px;height:26.0px;border:2px solid #fd2424;box-sizing:border-box;"></div>
<div class="a" style="left:890px;top:504.5px;width:342.5px;height:55.0px;border:2px solid #fd2424;box-sizing:border-box;"></div>
<div class="a" style="left:1325px;top:665px;width:89px;height:31px;border:2px solid #fd2424;box-sizing:border-box;"></div>
<div class="a badge" style="left:137.7px;top:106.6px;width:29.4px;height:29.4px;"></div>
<svg class="a" style="left:137px;top:106px" width="30" height="30" viewBox="0 0 30 30"><path d="M13.8 6.1 H18.2 V23.9 H13.8 V12.1 Q11.9 13.3 9.6 13.5 V9.9 Q12.9 9.3 13.8 6.1 Z" fill="#fff"/></svg>
<div class="a badge" style="left:288.7px;top:166.8px;width:29.4px;height:29.4px;"><span style="font-size:24px;font-weight:bold;line-height:1">2</span></div>
<div class="a badge" style="left:388.8px;top:162.8px;width:29.4px;height:29.4px;"><span style="font-size:24px;font-weight:bold;line-height:1">3</span></div>
<div class="a badge" style="left:454.0px;top:377.6px;width:29.4px;height:29.4px;"><span style="font-size:24px;font-weight:bold;line-height:1">4</span></div>
<div class="a badge" style="left:545.3px;top:442.8px;width:29.4px;height:29.4px;"><span style="font-size:24px;font-weight:bold;line-height:1">5</span></div>
<div class="a badge" style="left:497.7px;top:554.7px;width:29.4px;height:29.4px;"><span style="font-size:24px;font-weight:bold;line-height:1">6</span></div>
<div class="a badge" style="left:783.5px;top:607.7px;width:29.4px;height:29.4px;"><span style="font-size:24px;font-weight:bold;line-height:1">7</span></div>
<div class="a badge" style="left:1013.7px;top:362.8px;width:29.4px;height:29.4px;"><span style="font-size:24px;font-weight:bold;line-height:1">8</span></div>
<div class="a badge" style="left:1044.3px;top:400.7px;width:29.4px;height:29.4px;"><span style="font-size:24px;font-weight:bold;line-height:1">9</span></div>
<div class="a badge" style="left:1217.8px;top:488.6px;width:29.4px;height:29.4px;"></div>
<svg class="a" style="left:1223px;top:496px" width="20" height="14" viewBox="0 0 20 14"><path transform="translate(1.80,1.90)" d="M2.4 0 H4.4 V11 H2.4 V2.6 L0 2.8 V1 Q1.8 0.9 2.4 0 Z" fill="#fff"/><g transform="translate(9.90,1.90)"><rect x="0.9" y="0.9" width="5.4" height="9.2" rx="2" fill="none" stroke="#fff" stroke-width="1.8"/></g></svg>
<div class="a badge" style="left:1399.9px;top:647.5px;width:29.4px;height:29.4px;"></div>
<svg class="a" style="left:1405px;top:655px" width="20" height="14" viewBox="0 0 20 14"><path transform="translate(1.90,1.80)" d="M2.4 0 H4.4 V11 H2.4 V2.6 L0 2.8 V1 Q1.8 0.9 2.4 0 Z" fill="#fff"/><path transform="translate(10.90,1.80)" d="M2.4 0 H4.4 V11 H2.4 V2.6 L0 2.8 V1 Q1.8 0.9 2.4 0 Z" fill="#fff"/></svg>
<div class="a badge" style="left:665.0px;top:704.7px;width:29.4px;height:29.4px;"></div>
<svg class="a" style="left:671px;top:713px" width="20" height="14" viewBox="0 0 20 14"><path transform="translate(1.00,1.00)" d="M2.4 0 H4.4 V11 H2.4 V2.6 L0 2.8 V1 Q1.8 0.9 2.4 0 Z" fill="#fff"/><g transform="translate(9.10,1.00)"><path d="M0.9 3.1 Q0.9 0.9 3.6 0.9 Q6.3 0.9 6.3 3.2 Q6.3 5 3.8 7.2 L1 10.1 H7.2" fill="none" stroke="#fff" stroke-width="1.8"/></g></svg>
<div class="a badge" style="left:1152.8px;top:78.6px;width:29.4px;height:29.4px;"></div>
<svg class="a" style="left:1158px;top:86px" width="20" height="14" viewBox="0 0 20 14"><path transform="translate(1.80,1.90)" d="M2.4 0 H4.4 V11 H2.4 V2.6 L0 2.8 V1 Q1.8 0.9 2.4 0 Z" fill="#fff"/><g transform="translate(9.90,1.90)"><path d="M0.5 2.5 Q1.1 0.9 3.5 0.9 Q6.2 0.9 6.2 3 Q6.2 5.3 3 5.3 Q6.5 5.3 6.5 7.8 Q6.5 10.1 3.5 10.1 Q1 10.1 0.4 8.4" fill="none" stroke="#fff" stroke-width="1.8"/></g></svg>
</body></html>
